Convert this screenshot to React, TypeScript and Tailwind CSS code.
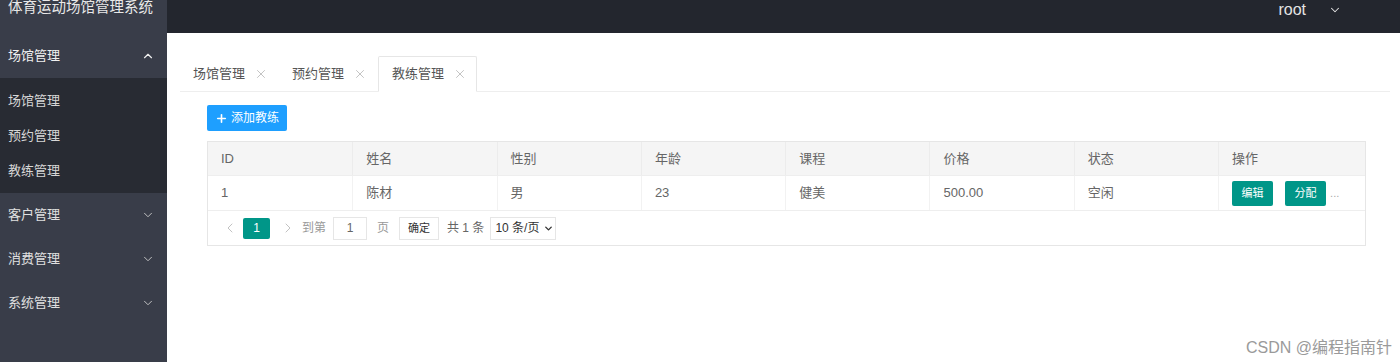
import { ChevronDown, ChevronUp, ChevronLeft, ChevronRight, Plus, X } from "lucide-react";

const font = { fontFamily: '"Liberation Sans", "Noto Sans CJK SC", sans-serif' };

const columns = ["ID", "姓名", "性别", "年龄", "课程", "价格", "状态", "操作"];
const row = ["1", "陈材", "男", "23", "健美", "500.00", "空闲"];

function Sidebar() {
  return (
    <div className="w-[167px] shrink-0 bg-[#393D49] flex flex-col text-[#d2d2d2]">
      <div className="h-[33px] overflow-hidden px-2">
        <div className="-mt-[3px] leading-[20px] text-[14.5px] text-[#e8e8e8] whitespace-nowrap">体育运动场馆管理系统</div>
      </div>
      {/* Expanded group */}
      <div className="h-[45px] flex items-center justify-between pl-2 pr-[12px] text-[13px] text-[#f0f0f0]">
        <span>场馆管理</span>
        <ChevronUp className="size-[14px]" strokeWidth={2} />
      </div>
      <div className="bg-[#282B33] py-[5px]">
        {["场馆管理", "预约管理", "教练管理"].map((t) => (
          <div key={t} className="h-[35px] flex items-center pl-2 text-[13px] text-[#d6d6d6]">
            {t}
          </div>
        ))}
      </div>
      {["客户管理", "消费管理", "系统管理"].map((t) => (
        <div key={t} className="h-[44px] flex items-center justify-between pl-2 pr-[12px] text-[13px] text-[#e0e0e0]">
          <span>{t}</span>
          <ChevronDown className="size-[14px] text-[#c8c8c8]" strokeWidth={1.6} />
        </div>
      ))}
    </div>
  );
}

function Tabs() {
  const tabs = ["场馆管理", "预约管理", "教练管理"];
  return (
    <div className="flex h-[36px] border-b border-[#eeeeee]">
      {tabs.map((t, i) => {
        const active = i === 2;
        return (
          <div
            key={t}
            className={`w-[99px] flex items-center pl-[13px] text-[13px] text-[#555] ${
              active ? "bg-white border border-[#e6e6e6] border-b-white -mb-px rounded-t-[2px]" : ""
            }`}
          >
            <span>{t}</span>
            <X className="size-[14px] ml-[9px] text-[#b0b0b0]" strokeWidth={1.3} />
          </div>
        );
      })}
    </div>
  );
}

function Table() {
  const grid = "grid grid-cols-[repeat(7,144.3px)_1fr]";
  return (
    <div className="mt-[10px] border border-[#e6e6e6] w-[1159px]">
      <div className={`${grid} h-[34px] bg-[#f5f5f5] border-b border-[#eeeeee]`}>
        {columns.map((c, i) => (
          <div
            key={c}
            className={`flex items-center pl-[13px] text-[13px] text-[#666] ${i > 0 ? "border-l border-[#ececec]" : ""}`}
          >
            {c}
          </div>
        ))}
      </div>
      <div className={`${grid} h-[35px] border-b border-[#eeeeee]`}>
        {row.map((c, i) => (
          <div
            key={i}
            className={`flex items-center pl-[13px] text-[13px] text-[#666] ${i > 0 ? "border-l border-[#f2f2f2]" : ""}`}
          >
            {c}
          </div>
        ))}
        <div className="flex items-center pl-[13px] border-l border-[#f2f2f2]">
          <button className="h-[25px] w-[41px] bg-[#009688] text-white text-[11px] rounded-[2px]">编辑</button>
          <button className="h-[25px] w-[41px] ml-[12px] bg-[#009688] text-white text-[11px] rounded-[2px]">分配</button>
          <span className="ml-[4px] text-[11px] text-[#aaa]">...</span>
        </div>
      </div>
      <div className="h-[34px] flex items-center pl-[14px] text-[12px] text-[#666]">
        <ChevronLeft className="size-[16px] text-[#c2c2c2]" strokeWidth={1.5} />
        <div className="ml-[5px] w-[27px] h-[21px] bg-[#009688] text-white flex items-center justify-center rounded-[2px] text-[12px]">
          1
        </div>
        <ChevronRight className="size-[16px] ml-[10px] text-[#c2c2c2]" strokeWidth={1.5} />
        <span className="ml-[6px] text-[#999]">到第</span>
        <div className="ml-[7px] w-[34px] h-[23px] border border-[#e6e6e6] flex items-center justify-center text-[#666]">1</div>
        <span className="ml-[10px] text-[#999]">页</span>
        <div className="ml-[10px] w-[40px] h-[23px] border border-[#e6e6e6] flex items-center justify-center text-[#333] text-[11px]">
          确定
        </div>
        <span className="ml-[8px] text-[#666]">共 1 条</span>
        <div className="ml-[6px] w-[66px] h-[23px] border border-[#e6e6e6] flex items-center pl-[4px] gap-[4px] text-[#333]">
          <span>10 条/页</span>
          <ChevronDown className="size-[11px]" strokeWidth={3} />
        </div>
      </div>
    </div>
  );
}

export default function App() {
  return (
    <div className="relative flex h-[362px] w-[1400px] overflow-hidden bg-white" style={font}>
      <Sidebar />
      <div className="flex-1 flex flex-col">
        <div className="h-[33px] bg-[#23262E] flex items-center justify-end pr-[58px] text-[#e4e4e4]">
          <span className="text-[16px] -mt-[13px]">root</span>
          <ChevronDown className="size-[14px] ml-[22px] -mt-[13px]" strokeWidth={1.8} />
        </div>
        <div className="pt-[23px] pl-[13px] pr-[10px]">
          <Tabs />
          <div className="pl-[27px] pt-[13px]">
            <button className="h-[26px] w-[80px] bg-[#1E9FFF] text-white text-[12px] flex items-center justify-center gap-[3px] rounded-[2px]">
              <Plus className="size-[13px]" strokeWidth={3} />
              添加教练
            </button>
            <Table />
          </div>
        </div>
      </div>
      <div className="absolute right-[8px] bottom-[2px] text-[16px] text-[#9a9a9a]">CSDN @编程指南针</div>
    </div>
  );
}
